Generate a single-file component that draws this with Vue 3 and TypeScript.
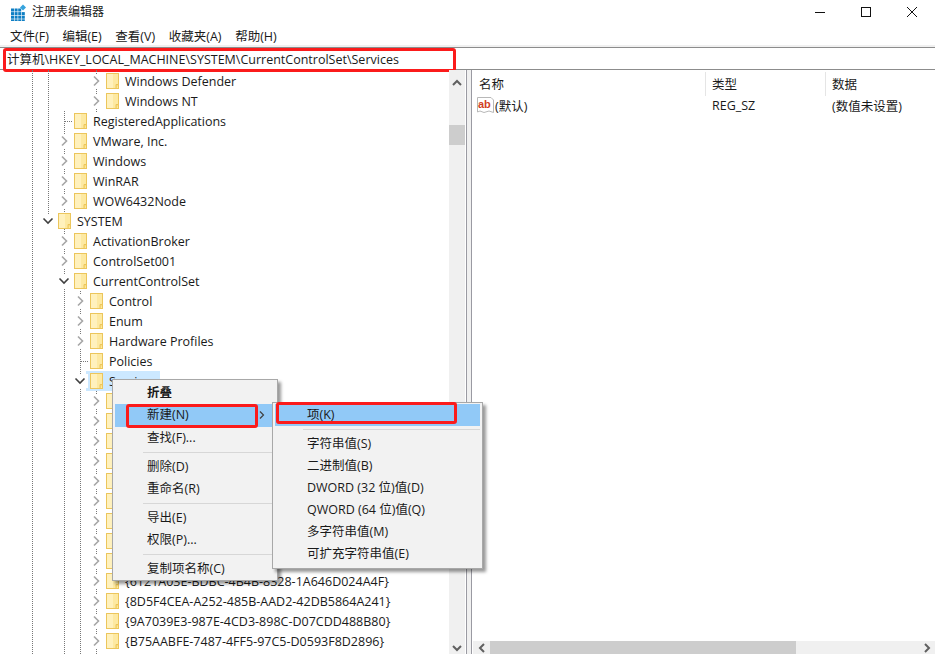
<script setup lang="ts">
interface Row { name: string; level: number; kind?: 'open' | 'leaf'; selected?: boolean }
interface Guide { x: number; top: number; height: number }

// Rows whose names lie fully behind the context menus keep only their chevron and folder.
const covered: Row[] = Array.from({ length: 9 }, () => ({ name: '', level: 3 }))

const rows: Row[] = [
  { name: 'Windows Defender', level: 3 },
  { name: 'Windows NT', level: 3 },
  { name: 'RegisteredApplications', level: 1, kind: 'leaf' },
  { name: 'VMware, Inc.', level: 1 },
  { name: 'Windows', level: 1 },
  { name: 'WinRAR', level: 1 },
  { name: 'WOW6432Node', level: 1 },
  { name: 'SYSTEM', level: 0, kind: 'open' },
  { name: 'ActivationBroker', level: 1 },
  { name: 'ControlSet001', level: 1 },
  { name: 'CurrentControlSet', level: 1, kind: 'open' },
  { name: 'Control', level: 2 },
  { name: 'Enum', level: 2 },
  { name: 'Hardware Profiles', level: 2 },
  { name: 'Policies', level: 2, kind: 'leaf' },
  { name: 'Services', level: 2, kind: 'open', selected: true },
  ...covered,
  { name: '{6121A03E-BDBC-4B4B-8328-1A646D024A4F}', level: 3 },
  { name: '{8D5F4CEA-A252-485B-AAD2-42DB5864A241}', level: 3 },
  { name: '{9A7039E3-987E-4CD3-898C-D07CDD488B80}', level: 3 },
  { name: '{B75AABFE-7487-4FF5-97C5-D0593F8D2896}', level: 3 },
]

const guides: Guide[] = [
  { x: 32, top: 0, height: 584 },
  { x: 48, top: 0, height: 144 },
  { x: 64, top: 41, height: 543 },
  { x: 80, top: 221, height: 363 },
  { x: 96, top: 0, height: 42 },
  { x: 96, top: 321, height: 263 },
]

const menus = ['文件(F)', '编辑(E)', '查看(V)', '收藏夹(A)', '帮助(H)']
const context = [
  [{ t: '折叠', bold: true }, { t: '新建(N)', hot: true, sub: true }, { t: '查找(F)...' }],
  [{ t: '删除(D)' }, { t: '重命名(R)' }],
  [{ t: '导出(E)' }, { t: '权限(P)...' }],
  [{ t: '复制项名称(C)' }],
]
const submenu = ['字符串值(S)', '二进制值(B)', 'DWORD (32 位)值(D)', 'QWORD (64 位)值(Q)', '多字符串值(M)', '可扩充字符串值(E)']
const grid = [0, 1, 2, 3].flatMap((r) => [0, 1, 2, 3].map((c) => ({ x: 1 + c * 3.6, y: 4.5 + r * 3.6 }))).filter((p) => !(p.x > 11 && p.y < 6))
</script>

<template>
  <div class="win">
    <header class="title">
      <svg class="appicon" width="17" height="17" viewBox="0 0 17 17">
        <rect v-for="(p, i) in grid" :key="i" :x="p.x" :y="p.y" width="3" height="3" fill="#0f7fc4" />
        <path d="M13 0.5 L16 3.5 L13 6.5 L10 3.5 Z" fill="#35a3dd" />
      </svg>
      <span class="title-text">注册表编辑器</span>
      <div class="caption">
        <span class="cap"><svg width="12" height="12" viewBox="0 0 12 12"><path d="M1 6.5H11" stroke="#111" fill="none" /></svg></span>
        <span class="cap"><svg width="12" height="12" viewBox="0 0 12 12"><rect x="1.5" y="1.5" width="9" height="9" stroke="#111" fill="none" /></svg></span>
        <span class="cap"><svg width="12" height="12" viewBox="0 0 12 12"><path d="M1 1L11 11M11 1L1 11" stroke="#111" fill="none" /></svg></span>
      </div>
    </header>
    <nav class="menubar"><span v-for="m in menus" :key="m">{{ m }}</span></nav>
    <div class="address">
      <span>计算机\HKEY_LOCAL_MACHINE\SYSTEM\CurrentControlSet\Services</span>
      <i class="mark mark-address"></i>
    </div>

    <main class="panes">
      <section class="tree">
        <i v-for="(g, i) in guides" :key="i" class="guide" :style="{ left: g.x + 'px', top: g.top + 'px', height: g.height + 'px' }"></i>
        <div v-for="(r, i) in rows" :key="i" class="row" :style="{ paddingLeft: 40 + r.level * 16 + 'px' }">
          <span class="exp" :class="{ 'exp-leaf': r.kind === 'leaf' }">
            <svg v-if="r.kind === 'open'" width="12" height="10" viewBox="0 0 12 10"><path d="M1.5 2.5L6 7L10.5 2.5" stroke="#404040" stroke-width="1.6" fill="none" /></svg>
            <svg v-else-if="r.kind !== 'leaf'" width="10" height="12" viewBox="0 0 10 12"><path d="M3 1.5L7.5 6L3 10.5" stroke="#a6a6a6" stroke-width="1.6" fill="none" /></svg>
            <i v-else class="stub"></i>
          </span>
          <span class="item" :class="{ selected: r.selected }">
            <svg class="folder" width="13" height="16" viewBox="0 0 13 16">
              <rect x="0.5" y="0.5" width="12" height="15" fill="#fde9a2" stroke="#ecc65c" />
              <rect x="1" y="1" width="6" height="14" fill="#fff1bd" />
              <path d="M10 15.5V11.5H12.5" fill="#fbdc7c" stroke="#ecc65c" />
            </svg>
            <span v-if="r.name" class="label">{{ r.name }}</span>
          </span>
        </div>
      </section>

      <aside class="vbar">
        <svg width="16" height="12" viewBox="0 0 16 12"><path d="M4 8L8 4L12 8" stroke="#606060" stroke-width="2" fill="none" /></svg>
        <i class="vthumb"></i>
        <svg width="16" height="12" viewBox="0 0 16 12"><path d="M4 4L8 8L12 4" stroke="#606060" stroke-width="2" fill="none" /></svg>
      </aside>
      <div class="split"></div>

      <section class="list">
        <div class="list-head">
          <span class="c1">名称</span><span class="c2">类型</span><span class="c3">数据</span>
        </div>
        <div class="list-row">
          <span class="c1 first">
            <svg width="17" height="17" viewBox="0 0 17 17">
              <path d="M0.5 0.5H14L16.5 3V15.5L12 14L7 15.5L3 14L0.5 15Z" fill="#fff" stroke="#b8b8b8" />
              <text x="1" y="11" class="ab">ab</text>
            </svg>
            (默认)
          </span>
          <span class="c2">REG_SZ</span><span class="c3">(数值未设置)</span>
        </div>
        <div class="hbar">
          <span class="harrow"><svg width="12" height="12" viewBox="0 0 12 12"><path d="M8 2L4 6L8 10" stroke="#606060" stroke-width="2" fill="none" /></svg></span>
          <i class="hthumb"></i>
          <span class="harrow end"><svg width="12" height="12" viewBox="0 0 12 12"><path d="M4 2L8 6L4 10" stroke="#606060" stroke-width="2" fill="none" /></svg></span>
        </div>
      </section>
    </main>

    <div class="menu ctx">
      <template v-for="(group, gi) in context" :key="gi">
        <hr v-if="gi" class="sep" />
        <div v-for="it in group" :key="it.t" class="mi" :class="{ hot: it.hot, bold: it.bold }">
          {{ it.t }}
          <svg v-if="it.sub" class="more" width="8" height="10" viewBox="0 0 8 10"><path d="M2 1.5L5.5 5L2 8.5" stroke="#404040" fill="none" stroke-width="1.2" /></svg>
          <i v-if="it.hot" class="mark mark-new"></i>
        </div>
      </template>
    </div>

    <div class="menu sub">
      <div class="mi hot">项(K)<i class="mark mark-key"></i></div>
      <hr class="sep" />
      <div v-for="s in submenu" :key="s" class="mi">{{ s }}</div>
    </div>
  </div>
</template>

<style>
html, body { margin: 0; background: #fff; }
</style>

<style scoped>
.win {
  position: relative;
  width: 935px;
  height: 657px;
  overflow: hidden;
  background: #fff;
  color: #1a1a1a;
  font-family: "Open Sans", "Noto Sans CJK SC", sans-serif;
  font-size: 12.5px;
  display: flex;
  flex-direction: column;
}
.title { height: 25px; display: flex; align-items: center; padding: 0 0 4px 10px; box-sizing: border-box; }
.appicon { margin: 4px 5px 0 0; }
.title-text { font-size: 12px; }
.caption { margin-left: auto; display: flex; align-self: flex-start; }
.cap { width: 46px; height: 23px; display: flex; align-items: center; justify-content: center; }
.menubar { height: 19px; display: flex; gap: 13.6px; padding: 1px 0 0 10px; align-items: center; border-bottom: 2px solid #f0f0f0; }
.address {
  position: relative;
  height: 21px;
  border-top: 1px solid #8c8c8c;
  border-bottom: 1px solid #8c8c8c;
  display: flex;
  align-items: center;
  padding-left: 7px;
}
.mark { position: absolute; border: 3px solid #fb1b1b; border-radius: 3px; box-sizing: border-box; pointer-events: none; }
.mark-address { left: 3px; top: 0; width: 453px; height: 24px; }
.mark-new { left: 11px; top: 0; width: 132px; height: 24px; }
.mark-key { left: 1px; top: -2px; width: 181px; height: 22px; }

.panes { flex: none; height: 584px; display: flex; }
.tree { position: relative; width: 449px; height: 584px; overflow: hidden; padding-top: 1px; box-sizing: border-box; }
.guide { position: absolute; width: 0; border-left: 1px dotted #777; }
.row { position: relative; height: 20px; display: flex; align-items: center; white-space: nowrap; }
.exp { width: 16px; height: 14px; background: #fff; display: flex; align-items: center; justify-content: center; flex: none; position: relative; }
.exp-leaf { background: transparent; }
.stub { position: absolute; left: 8px; top: 7px; width: 8px; border-top: 1px dotted #777; }
.item { display: flex; align-items: center; height: 20px; padding-left: 4px; padding-right: 4px; margin-left: -2px; }
.item.selected { background: #cce8ff; }
.folder { flex: none; margin-right: 6px; }

.vbar { width: 16px; background: #f0f0f0; display: flex; flex-direction: column; align-items: center; position: relative; justify-content: space-between; padding-top: 7px; box-sizing: border-box; height: 584px; }
.vthumb { position: absolute; left: 0; top: 55px; width: 16px; height: 20px; background: #cdcdcd; }
.split { width: 4px; height: 584px; border-left: 1px solid #9a9aa2; border-right: 1px solid #9a9aa2; background: #f0f0f0; margin-left: 1px; }
.list { position: relative; flex: 1; min-width: 0; padding-left: 1px; }
.list-head { height: 25px; display: flex; align-items: flex-start; }
.list-head span { margin-top: 2px; height: 24px; padding-bottom: 2px; display: flex; align-items: center; box-sizing: border-box; }
.list-head .c1, .list-head .c2 { border-right: 1px solid #e5e5e5; }
.c1 { width: 233px; padding-left: 6px; box-sizing: border-box; }
.c2 { width: 120px; padding-left: 6px; box-sizing: border-box; }
.c3 { padding-left: 6px; }
.list-row { height: 20px; display: flex; align-items: center; }
.first { display: flex; align-items: center; gap: 1px; padding-left: 4px; }
.ab { font: bold 11px "Liberation Sans", sans-serif; fill: #d2401f; }
.hbar { position: absolute; left: 1px; right: 0; bottom: 0; height: 13px; background: #f0f0f0; display: flex; align-items: center; }
.harrow { width: 17px; height: 13px; display: flex; align-items: center; justify-content: center; flex: none; }
.hthumb { width: 306px; height: 13px; background: #cdcdcd; }
.harrow.end { margin-left: auto; }

.menu {
  position: absolute;
  background: #f2f2f2;
  border: 1px solid #a8a8a8;
  box-shadow: 3px 3px 3px rgba(0, 0, 0, 0.4);
  box-sizing: border-box;
  padding: 1px 2px;
}
.ctx { left: 112px; top: 379px; width: 166px; height: 202px; padding-top: 2px; }
.sub { left: 272px; top: 402px; width: 211px; height: 167px; z-index: 2; }
.mi { position: relative; height: 22px; line-height: 22px; padding-left: 32px; white-space: nowrap; }
.ctx .mi { height: 22.3px; }
.hot { background: #91c9f7; }
.bold { font-weight: 700; }
.more { position: absolute; right: 9px; top: 6px; }
.sep { border: 0; border-top: 1px solid #d7d7d7; margin: 3px 0 3px 28px; height: 0; }
.ctx .sep { margin-bottom: 2.7px; }
</style>
